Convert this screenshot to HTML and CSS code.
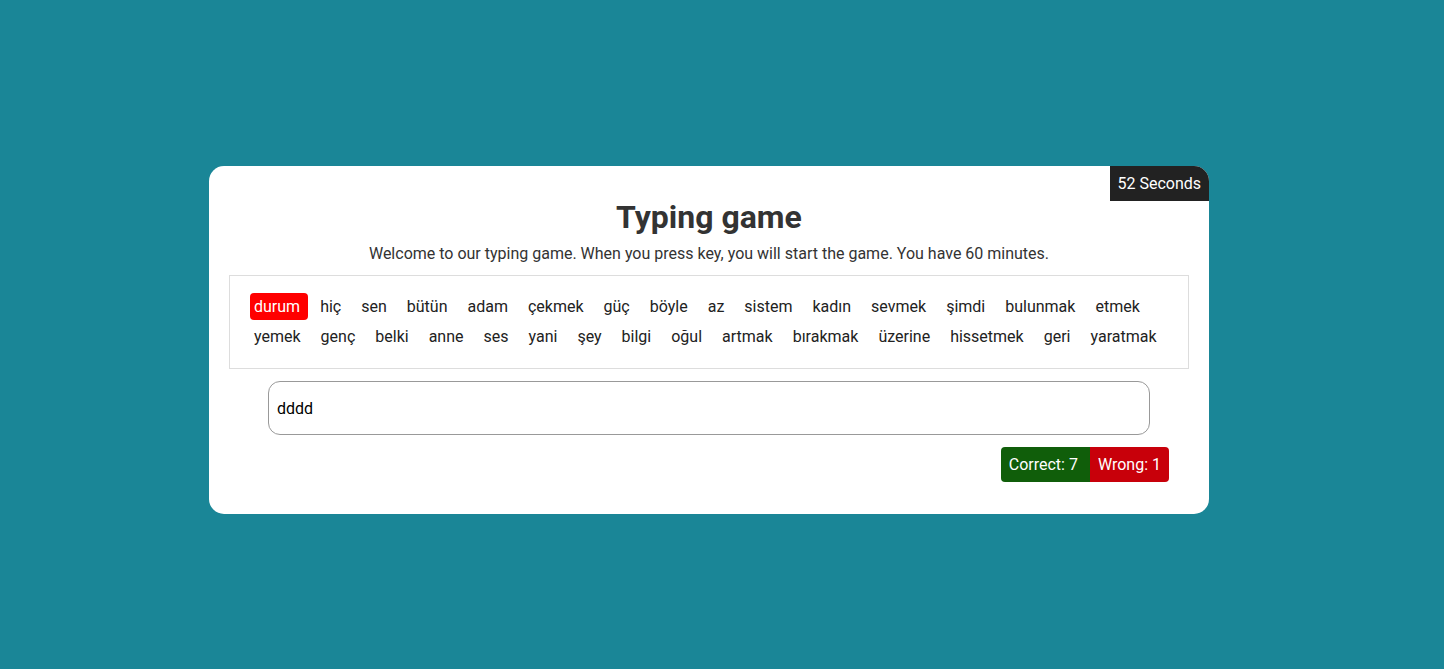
FILE: index.html
```html
<!DOCTYPE html>
<html lang="tr">
<head>
<meta charset="utf-8">
<title>Typing game</title>
<link rel="stylesheet" href="styles.css">
</head>
<body>
<div class="card">
  <div class="timer">52 Seconds</div>
  <h1 class="title">Typing game</h1>
  <p class="subtitle">Welcome to our typing game. When you press key, you will start the game. You have 60 minutes.</p>
  <div class="words">
    <span class="word current">durum</span>
    <span class="word">hiç</span>
    <span class="word">sen</span>
    <span class="word">bütün</span>
    <span class="word">adam</span>
    <span class="word">çekmek</span>
    <span class="word">güç</span>
    <span class="word">böyle</span>
    <span class="word">az</span>
    <span class="word">sistem</span>
    <span class="word">kadın</span>
    <span class="word">sevmek</span>
    <span class="word">şimdi</span>
    <span class="word">bulunmak</span>
    <span class="word">etmek</span>
    <span class="word">yemek</span>
    <span class="word">genç</span>
    <span class="word">belki</span>
    <span class="word">anne</span>
    <span class="word">ses</span>
    <span class="word">yani</span>
    <span class="word">şey</span>
    <span class="word">bilgi</span>
    <span class="word">oğul</span>
    <span class="word">artmak</span>
    <span class="word">bırakmak</span>
    <span class="word">üzerine</span>
    <span class="word">hissetmek</span>
    <span class="word">geri</span>
    <span class="word">yaratmak</span>
  </div>
  <input class="typing-input" type="text" value="dddd">
  <div class="score">
    <span class="score-item correct">Correct: 7</span>
    <span class="score-item wrong">Wrong: 1</span>
  </div>
</div>
</body>
</html>
```

FILE: styles.css
```css
html, body {
  margin: 0;
  padding: 0;
}
body {
  background: #1a8697;
  font-family: Roboto, "Noto Sans", "Liberation Sans", sans-serif;
  color: #333;
  height: 669px;
  box-sizing: border-box;
  padding: 166px 0 0 209px;
}
.card {
  position: relative;
  width: 1000px;
  box-sizing: border-box;
  background: #fff;
  border-radius: 15px;
  padding: 32px 20px 32px;
  display: flex;
  flex-direction: column;
  align-items: center;
}
.timer {
  position: absolute;
  top: 0;
  right: 0;
  background: #222;
  color: #fff;
  font-size: 16px;
  line-height: 35px;
  height: 35px;
  padding: 0 8px 0 7px;
  border-top-right-radius: 15px;
}
.title {
  margin: 0;
  font-size: 32px;
  line-height: 38px;
  font-weight: 700;
  color: #333;
}
.subtitle {
  margin: 8px 0 12px;
  font-size: 16px;
  line-height: 19px;
  color: #333;
}
.words {
  width: 960px;
  box-sizing: border-box;
  border: 1px solid #ddd;
  padding: 17px 20px 18px;
  display: flex;
  flex-wrap: wrap;
  column-gap: 8px;
  row-gap: 3px;
}
.word {
  font-size: 16px;
  line-height: 27px;
  height: 27px;
  padding: 0 8px 0 4px;
  border-radius: 4px;
  color: #222;
}
.word.current {
  background: #ff0000;
  color: #fff;
}
.typing-input {
  margin-top: 12px;
  width: 882px;
  height: 54px;
  box-sizing: border-box;
  border: 1px solid #999;
  border-radius: 12px;
  padding: 0 8px;
  font-family: Roboto, "Noto Sans", "Liberation Sans", sans-serif;
  font-size: 16px;
  color: #000;
  outline: none;
}
.score {
  margin-top: 12px;
  align-self: flex-end;
  margin-right: 20px;
  display: flex;
  border-radius: 4px;
  overflow: hidden;
}
.score-item {
  color: #fff;
  font-size: 16px;
  line-height: 35px;
  height: 35px;
  padding: 0 8px;
}
.correct {
  background: #105e0a;
  padding-right: 12px;
}
.wrong {
  background: #c8000a;
}
```
